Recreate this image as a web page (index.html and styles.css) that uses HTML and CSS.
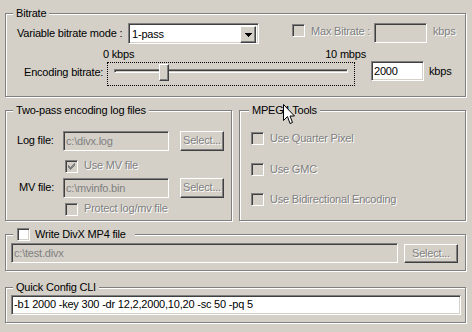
FILE: index.html
```html
<!DOCTYPE html>
<html lang="en">
<head>
<meta charset="UTF-8">
<title>DivX Codec Properties</title>
<link rel="stylesheet" href="styles.css">
</head>
<body>
<div class="dialog">

  <div class="group bitrate">
    <div class="legend">Bitrate</div>
    <div class="row mode-row">
      <span class="mode-label">Variable bitrate mode :</span>
      <div class="combo">
        <span class="combo-text">1-pass</span>
        <span class="combo-btn">
          <svg width="7" height="4" viewBox="0 0 7 4"><path d="M0 0h7v1H0zM1 1h5v1H1zM2 2h3v1H2zM3 3h1v1H3z" fill="#000"/></svg>
        </span>
      </div>
      <span class="check off max-check"></span>
      <span class="dim max-label">Max Bitrate :</span>
      <div class="edit off max-edit"></div>
      <span class="dim max-unit">kbps</span>
    </div>
    <div class="row scale-row">
      <span>0 kbps</span>
      <span>10 mbps</span>
    </div>
    <div class="row slider-row">
      <span class="enc-label">Encoding bitrate:</span>
      <div class="slider">
        <div class="rail">
          <div class="thumb"></div>
        </div>
      </div>
      <div class="edit value-edit">2000</div>
      <span class="value-unit">kbps</span>
    </div>
  </div>

  <div class="middle">
    <div class="group half">
      <div class="legend">Two-pass encoding log files</div>
      <div class="row file-row log-row">
        <span class="file-label">Log file:</span>
        <div class="edit off path-edit">c:\divx.log</div>
        <div class="button dim select-small">Select...</div>
      </div>
      <div class="row check-row mv-check">
        <span class="check off">
          <svg width="11" height="11" viewBox="0 0 11 11"><path d="M2 4h1v3H2zM3 5h1v3H3zM4 6h1v3H4zM5 5h1v3H5zM6 4h1v3H6zM7 3h1v3H7zM8 2h1v3H8z" fill="#808080"/></svg>
        </span>
        <span class="dim check-text">Use MV file</span>
      </div>
      <div class="row file-row mv-row">
        <span class="file-label mv-label">MV file:</span>
        <div class="edit off path-edit">c:\mvinfo.bin</div>
        <div class="button dim select-small">Select...</div>
      </div>
      <div class="row check-row protect-check">
        <span class="check off"></span>
        <span class="dim check-text">Protect log/mv file</span>
      </div>
    </div>

    <div class="group half">
      <div class="legend mpeg-legend">MPEG4 Tools</div>
      <div class="row tool-row tool-first">
        <span class="check off"></span>
        <span class="dim check-text">Use Quarter Pixel</span>
      </div>
      <div class="row tool-row tool-second">
        <span class="check off"></span>
        <span class="dim check-text">Use GMC</span>
      </div>
      <div class="row tool-row tool-third">
        <span class="check off"></span>
        <span class="dim check-text">Use Bidirectional Encoding</span>
      </div>
    </div>
  </div>

  <div class="group divx">
    <div class="legend check-legend">
      <span class="check"></span>
      <span class="check-text">Write DivX MP4 file</span>
    </div>
    <div class="row divx-row">
      <div class="edit off divx-edit">c:\test.divx</div>
      <div class="button dim select-wide">Select...</div>
    </div>
  </div>

  <div class="group cli">
    <div class="legend">Quick Config CLI</div>
    <div class="edit cli-edit">-b1 2000 -key 300 -dr 12,2,2000,10,20 -sc 50 -pq 5</div>
  </div>

  <!-- mouse pointer sitting over the MPEG4 Tools caption -->
  <svg class="cursor" width="13" height="21" viewBox="0 0 13 21">
    <path d="M0.5 0.5V16.5L4.5 12.5L7 19.5L9.5 18.5L7 12H11.5Z" fill="#fff" stroke="#000"/>
  </svg>
</div>
</body>
</html>
```

FILE: styles.css
```css
* {
  margin: 0;
  padding: 0;
  box-sizing: border-box;
}
body {
  background-color: #d4d0c8;
  font-family: "Liberation Sans", Arial, sans-serif;
  font-size: 11px;
  letter-spacing: -0.2px;
  color: #000;
  overflow: hidden;
}
.dialog {
  position: relative;
  width: 472px;
  height: 332px;
  padding: 13px 0 0 5px;
}

/* etched group boxes */
.group {
  width: 461px;
  border: 1px solid #808080;
  box-shadow: inset 1px 1px #fff, 1px 1px #fff;
}
.legend {
  width: fit-content;
  height: 13px;
  line-height: 13px;
  margin: -7px 0 0 7px;
  padding: 0 3px 0 3px;
  background-color: #d4d0c8;
  white-space: nowrap;
}
.row {
  display: flex;
  align-items: flex-start;
  white-space: nowrap;
}
.dim {
  color: #808080;
  text-shadow: 1px 1px #fff;
}

/* controls */
.edit {
  height: 20px;
  border: 1px solid;
  border-color: #808080 #fff #fff #808080;
  box-shadow: inset 1px 1px #404040, inset -1px -1px #d4d0c8;
  background-color: #fff;
  padding: 2px 0 0 2px;
  line-height: 14px;
  white-space: nowrap;
  overflow: hidden;
}
.edit.off {
  background-color: #d4d0c8;
  color: #808080;
}
.button {
  height: 20px;
  border: 1px solid;
  border-color: #fff #404040 #404040 #fff;
  box-shadow: inset -1px -1px #808080;
  text-align: center;
  line-height: 17px;
}
.check {
  display: block;
  flex: none;
  width: 13px;
  height: 13px;
  border: 1px solid;
  border-color: #808080 #fff #fff #808080;
  box-shadow: inset 1px 1px #404040, inset -1px -1px #d4d0c8;
  background-color: #fff;
}
.check.off {
  background-color: #d4d0c8;
}
.check svg {
  display: block;
}
.check-text {
  line-height: 13px;
  margin-left: 6px;
}

/* bitrate group */
.bitrate {
  height: 84px;
}
.mode-row {
  margin-top: 3px;
  height: 21px;
}
.mode-label {
  width: 111px;
  margin: 4px 0 0 11px;
  line-height: 13px;
}
.combo {
  display: flex;
  width: 131px;
  height: 21px;
  border: 1px solid;
  border-color: #808080 #fff #fff #808080;
  box-shadow: inset 1px 1px #404040, inset -1px -1px #d4d0c8;
  background-color: #fff;
  padding: 2px;
}
.combo-text {
  flex: 1;
  padding-left: 1px;
  line-height: 17px;
}
.combo-btn {
  display: flex;
  align-items: center;
  justify-content: center;
  width: 16px;
  height: 17px;
  background-color: #d4d0c8;
  border: 1px solid;
  border-color: #fff #404040 #404040 #fff;
  box-shadow: inset -1px -1px #808080;
}
.max-check {
  margin: 1px 0 0 33px;
}
.max-label {
  width: 63px;
  margin: 2px 0 0 6px;
  line-height: 13px;
}
.max-edit {
  width: 53px;
}
.max-unit {
  margin: 2px 0 0 6px;
  line-height: 13px;
}
.scale-row {
  height: 17px;
  width: 360px;
  padding-left: 97px;
  justify-content: space-between;
  align-items: flex-end;
  line-height: 13px;
}
.slider-row {
  height: 25px;
}
.enc-label {
  width: 83px;
  margin: 5px 0 0 18px;
  line-height: 13px;
}
.slider {
  width: 248px;
  height: 24px;
  margin-top: 1px;
  border: 1px dotted #000;
  padding: 6px 6px 0;
}
.rail {
  position: relative;
  height: 4px;
  border: 1px solid;
  border-color: #808080 #fff #fff #808080;
  box-shadow: inset 1px 1px #404040, inset -1px -1px #d4d0c8;
}
.thumb {
  position: absolute;
  top: -6px;
  left: 44px;
  width: 10px;
  height: 17px;
  background-color: #d4d0c8;
  border: 1px solid;
  border-color: #fff #404040 #404040 #fff;
  box-shadow: inset -1px -1px #808080;
}
.value-edit {
  width: 53px;
  margin-left: 16px;
}
.value-unit {
  margin: 4px 0 0 5px;
  line-height: 13px;
}

/* two-pass and mpeg4 */
.middle {
  display: flex;
  gap: 7px;
  margin-top: 13px;
}
.half {
  width: 227px;
  height: 111px;
}
.file-label {
  width: 46px;
  margin: 3px 0 0 11px;
  line-height: 13px;
}
.mv-label {
  width: 44px;
  margin-left: 13px;
}
.path-edit {
  width: 106px;
}
.select-small {
  width: 44px;
  margin-left: 11px;
}
.log-row {
  margin-top: 14px;
}
.check-row {
  margin-left: 59px;
  height: 13px;
}
.check-row .check-text {
  margin-top: -1px;
}
.mv-check {
  margin-top: 9px;
}
.mv-row {
  margin-top: 5px;
}
.protect-check {
  margin-top: 5px;
}
.mpeg-legend {
  margin-left: 9px;
}
.tool-row {
  height: 13px;
  margin-left: 11px;
}
.tool-first {
  margin-top: 15px;
}
.tool-second {
  margin-top: 18px;
}
.tool-third {
  margin-top: 17px;
}

/* divx output */
.divx {
  height: 37px;
  margin-top: 13px;
}
.check-legend {
  display: flex;
  align-items: center;
  padding: 0 9px 0 4px;
}
.check-legend .check-text {
  margin-left: 5px;
}
.divx-row {
  margin-top: 2px;
}
.divx-edit {
  width: 387px;
  margin-left: 5px;
}
.select-wide {
  width: 54px;
  height: 19px;
  margin: 1px 0 0 6px;
}

/* cli */
.cli {
  height: 36px;
  margin-top: 16px;
}
.cli-edit {
  width: 450px;
  margin: 1px 0 0 5px;
  padding-top: 1px;
}

.cursor {
  position: absolute;
  left: 283px;
  top: 104px;
}
```
